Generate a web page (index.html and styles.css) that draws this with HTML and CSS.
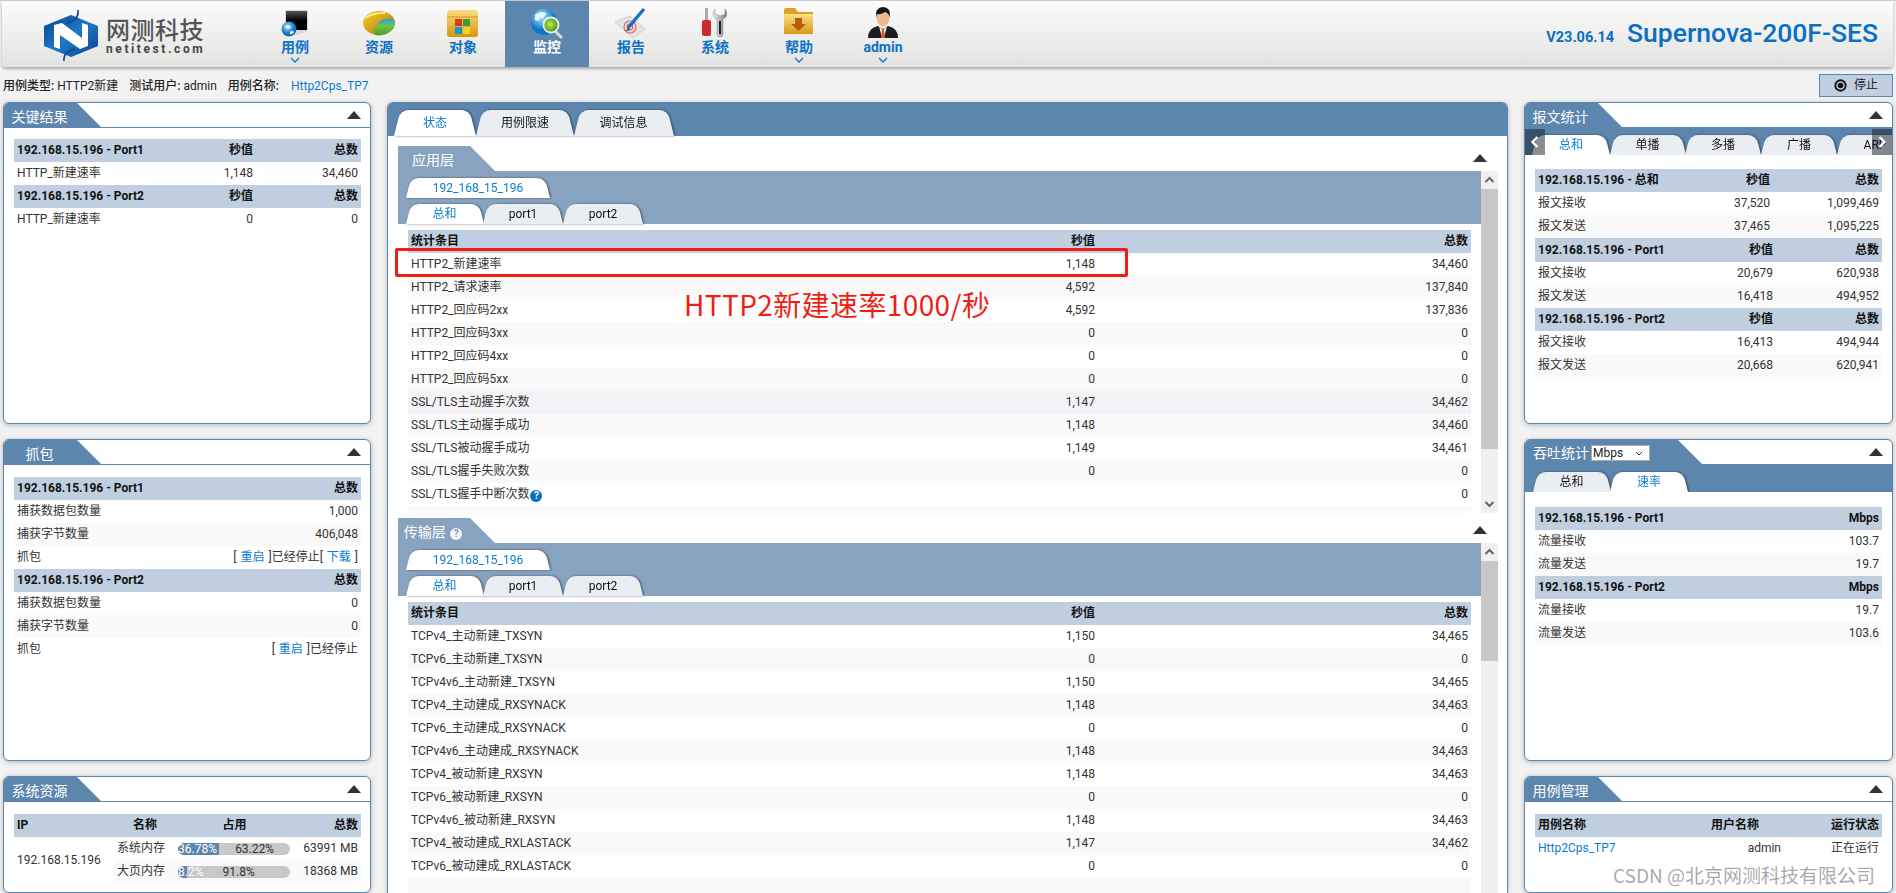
FILE: index.html
```html
<!DOCTYPE html>
<html lang="zh">
<head>
<meta charset="utf-8">
<title>Supernova</title>
<link rel="stylesheet" href="styles.css">
</head>
<body>
<header class="topbar">
  <div class="logo">
    <svg class="logo-mark" width="56" height="52" viewBox="0 0 56 52">
      <defs><linearGradient id="lg" x1="0" y1="0" x2="1" y2="1"><stop offset="0" stop-color="#0b3f8e"/><stop offset=".5" stop-color="#1c7ac8"/><stop offset="1" stop-color="#0b3f8e"/></linearGradient></defs>
      <polygon points="28,5 55,16 55,36 28,47 1,36 1,16" fill="url(#lg)"/>
      <path d="M11 15 L11 37 L17 39 L17 25 L37 39 L45 36 L45 15 L39 13 L39 28 L19 13 Z" fill="#fff"/>
      <path d="M35 0 C36 8 30 12 24 13 M21 51 C20 44 26 40 32 39" fill="none" stroke="#123f86" stroke-width="1.6"/>
    </svg>
    <div class="logo-text">
      <div class="logo-cn">网测科技</div>
      <div class="logo-en">netitest.com</div>
    </div>
  </div>
  <nav class="nav">
    <a class="nav-item">
      <svg class="nav-icon" width="36" height="32" viewBox="0 0 36 32">
        <defs><linearGradient id="m1" x1="0" y1="0" x2="0" y2="1"><stop offset="0" stop-color="#555"/><stop offset=".5" stop-color="#000"/></linearGradient><radialGradient id="g1" cx=".4" cy=".35"><stop offset="0" stop-color="#9fe0fa"/><stop offset="1" stop-color="#0c6fc0"/></radialGradient></defs>
        <path d="M8 3 H31 V24 L20 28 H8 Z" fill="#d8d8d8"/>
        <rect x="9" y="4" width="21" height="19" fill="url(#m1)"/>
        <circle cx="12" cy="22" r="7.5" fill="url(#g1)"/>
        <path d="M8 19 q4 -2 6 1 q-2 3 -5 1 Z M13 25 q3 -2 4 0 q-2 3 -4 2 Z" fill="#e6f6fd"/>
      </svg>
      <span class="nav-label">用例</span>
      <svg class="nav-caret" width="10" height="6" viewBox="0 0 10 6"><path d="M1 1 L5 5 L9 1" fill="none" stroke="#0b72c4" stroke-width="1.3"/></svg>
    </a>
    <a class="nav-item">
      <svg class="nav-icon" width="36" height="32" viewBox="0 0 36 32">
        <defs><linearGradient id="l1" x1="0" y1="0" x2="1" y2="1"><stop offset="0" stop-color="#fbd52e"/><stop offset="1" stop-color="#a86a06"/></linearGradient><linearGradient id="l2" x1="0" y1="0" x2="0" y2="1"><stop offset="0" stop-color="#2b9fe0"/><stop offset=".45" stop-color="#72c34a"/><stop offset="1" stop-color="#4c9a22"/></linearGradient></defs>
        <ellipse cx="18" cy="16" rx="16" ry="12" fill="url(#l1)"/>
        <path d="M34 14 C30 10 22 11 18 15 C14 19 13 24 14 28 C24 30 34 24 34 14 Z" fill="url(#l2)"/>
        <path d="M4 11 C10 7 18 6 24 6" fill="none" stroke="#fff3a8" stroke-width="1.5"/>
      </svg>
      <span class="nav-label">资源</span>
    </a>
    <a class="nav-item">
      <svg class="nav-icon" width="36" height="32" viewBox="0 0 36 32">
        <defs><linearGradient id="f1" x1="0" y1="0" x2="0" y2="1"><stop offset="0" stop-color="#fbdd80"/><stop offset="1" stop-color="#d7930f"/></linearGradient></defs>
        <path d="M5 3 H30 Q33 3 33 7 V27 Q33 30 30 30 H5 Q2 30 2 27 V7 Q2 3 5 3 Z" fill="url(#f1)"/>
        <path d="M2 10 H33" stroke="#c9982d" stroke-width="1"/>
        <rect x="10" y="12" width="7" height="7" fill="#d8391f"/><rect x="18" y="12" width="7" height="7" fill="#3e9b35"/>
        <rect x="10" y="20" width="7" height="7" fill="#119ccf"/><rect x="18" y="20" width="7" height="7" fill="#f3d21b"/>
      </svg>
      <span class="nav-label">对象</span>
    </a>
    <a class="nav-item nav-item--active">
      <svg class="nav-icon" width="36" height="32" viewBox="0 0 36 32">
        <defs><radialGradient id="g2" cx=".4" cy=".3"><stop offset="0" stop-color="#b8ecfb"/><stop offset="1" stop-color="#0b74cd"/></radialGradient><radialGradient id="g3" cx=".45" cy=".45"><stop offset="0" stop-color="#c5e85c"/><stop offset="1" stop-color="#4d9a12"/></radialGradient></defs>
        <circle cx="15" cy="15" r="13" fill="url(#g2)"/>
        <path d="M6 8 q5 -5 11 -2 q-1 5 -6 5 q-1 4 -5 2 Z" fill="#e5f7fd"/>
        <path d="M26 24 L33 31" stroke="#d8d8d8" stroke-width="3"/>
        <circle cx="22" cy="18" r="7.5" fill="url(#g3)" stroke="#e9f3f6" stroke-width="1.8"/>
      </svg>
      <span class="nav-label">监控</span>
    </a>
    <a class="nav-item">
      <svg class="nav-icon" width="36" height="32" viewBox="0 0 36 32">
        <path d="M2 15 L17 9 L32 22 L20 31 Z" fill="#e4e4e4" stroke="#bbb" stroke-width=".6"/>
        <circle cx="17" cy="20" r="6" fill="none" stroke="#dc6a6a" stroke-width="1.2"/>
        <circle cx="17" cy="20" r="2.8" fill="none" stroke="#dc6a6a" stroke-width="1.2"/>
        <path d="M15 21 L31 2" stroke="#1b6fc8" stroke-width="3.4"/>
        <path d="M15 21 L13 24 L17 23 Z" fill="#333"/>
      </svg>
      <span class="nav-label">报告</span>
    </a>
    <a class="nav-item">
      <svg class="nav-icon" width="36" height="32" viewBox="0 0 36 32">
        <defs><linearGradient id="w1" x1="0" y1="0" x2="1" y2="0"><stop offset="0" stop-color="#eee"/><stop offset="1" stop-color="#777"/></linearGradient></defs>
        <path d="M8 1 H11 V13 H8 Z" fill="#aaa"/>
        <rect x="5" y="13" width="9" height="16" rx="2" fill="#cd2b2b"/>
        <path d="M18 2 C15 6 16 11 20 12 V27 Q20 30 23 30 Q26 30 26 27 V12 C30 11 31 6 28 2 V7 L23 9 L18 7 Z" fill="url(#w1)" stroke="#888" stroke-width=".5"/>
        <rect x="22" y="14" width="2" height="13" fill="#222"/>
      </svg>
      <span class="nav-label">系统</span>
    </a>
    <a class="nav-item">
      <svg class="nav-icon" width="36" height="32" viewBox="0 0 36 32">
        <defs><linearGradient id="f2" x1="0" y1="0" x2="0" y2="1"><stop offset="0" stop-color="#fbe083"/><stop offset="1" stop-color="#d99a16"/></linearGradient></defs>
        <path d="M3 3 Q3 1 5 1 H14 L17 5 H32 V27 H3 Z" fill="#d9a32a"/>
        <rect x="3" y="7" width="29" height="20" rx="1" fill="url(#f2)"/>
        <path d="M14 11 H21 V17 H25 L17.5 24 L10 17 H14 Z" fill="#b9590c"/>
      </svg>
      <span class="nav-label">帮助</span>
      <svg class="nav-caret" width="10" height="6" viewBox="0 0 10 6"><path d="M1 1 L5 5 L9 1" fill="none" stroke="#0b72c4" stroke-width="1.3"/></svg>
    </a>
    <a class="nav-item">
      <svg class="nav-icon" width="36" height="32" viewBox="0 0 36 32">
        <path d="M3 31 Q3 21 13 19 L18 22 L23 19 Q33 21 33 31 Z" fill="#1d1d1f"/>
        <path d="M14 19 L18 23 L22 19 L19 31 H17 Z" fill="#f3f3f3"/>
        <path d="M17 22 H19 L20 31 H16 Z" fill="#d9581c"/>
        <ellipse cx="18" cy="11" rx="6.5" ry="8.5" fill="#eab98d"/>
        <path d="M11 11 Q10 0 18 0 Q26 0 25 11 Q24 6 20 5 Q15 8 12 7 Z" fill="#141414"/>
      </svg>
      <span class="nav-label">admin</span>
      <svg class="nav-caret" width="10" height="6" viewBox="0 0 10 6"><path d="M1 1 L5 5 L9 1" fill="none" stroke="#0b72c4" stroke-width="1.3"/></svg>
    </a>
  </nav>
  <div class="brand">
    <span class="brand-version">V23.06.14</span>
    <span class="brand-name">Supernova-200F-SES</span>
  </div>
</header>

<div class="infobar">
  <div class="info">
    <span class="info-item"><b class="info-key">用例类型:</b> HTTP2新建</span>
    <span class="info-item"><b class="info-key">测试用户:</b> admin</span>
    <span class="info-item"><b class="info-key">用例名称:</b><a class="link info-link">Http2Cps_TP7</a></span>
  </div>
  <button class="stop">
    <svg width="13" height="13" viewBox="0 0 13 13"><circle cx="6.5" cy="6.5" r="5.2" fill="none" stroke="#111" stroke-width="1.9"/><circle cx="6.5" cy="6.5" r="2.8" fill="#111"/></svg>
    <span>停止</span>
  </button>
</div>

<main class="main">
  <div class="col">
    <section class="panel panel--h322">
      <div class="panel-head"><h2 class="title">关键结果</h2><i class="collapse"></i></div>
      <div class="panel-body">
        <table class="grid grid--left">
          <colgroup><col class="c-l1"><col class="c-l2"><col class="c-l3"></colgroup>
          <tr class="hd"><th>192.168.15.196 - Port1</th><th class="r">秒值</th><th class="r">总数</th></tr>
          <tr><td>HTTP_新建速率</td><td class="r">1,148</td><td class="r">34,460</td></tr>
          <tr class="hd"><th>192.168.15.196 - Port2</th><th class="r">秒值</th><th class="r">总数</th></tr>
          <tr><td>HTTP_新建速率</td><td class="r">0</td><td class="r">0</td></tr>
        </table>
      </div>
    </section>
    <section class="panel panel--h322">
      <div class="panel-head"><h2 class="title">抓包</h2><i class="collapse"></i></div>
      <div class="panel-body">
        <table class="grid grid--left">
          <colgroup><col class="c-w1"><col class="c-w2"></colgroup>
          <tr class="hd"><th>192.168.15.196 - Port1</th><th class="r">总数</th></tr>
          <tr><td>捕获数据包数量</td><td class="r">1,000</td></tr>
          <tr class="alt"><td>捕获字节数量</td><td class="r">406,048</td></tr>
          <tr><td>抓包</td><td class="r">[ <a class="link link--act">重启</a> ]已经停止[ <a class="link link--act">下载</a> ]</td></tr>
          <tr class="hd"><th>192.168.15.196 - Port2</th><th class="r">总数</th></tr>
          <tr><td>捕获数据包数量</td><td class="r">0</td></tr>
          <tr class="alt"><td>捕获字节数量</td><td class="r">0</td></tr>
          <tr><td>抓包</td><td class="r">[ <a class="link link--act">重启</a> ]已经停止</td></tr>
        </table>
      </div>
    </section>
    <section class="panel panel--h117">
      <div class="panel-head"><h2 class="title">系统资源</h2><i class="collapse"></i></div>
      <div class="panel-body">
        <table class="grid grid--left">
          <colgroup><col class="c-s1"><col class="c-s2"><col class="c-s3"><col class="c-s4"></colgroup>
          <tr class="hd"><th>IP</th><th class="c">名称</th><th class="c">占用</th><th class="r">总数</th></tr>
          <tr>
            <td rowspan="2">192.168.15.196</td><td>系统内存</td>
            <td class="barcell"><div class="bar"><span class="bar-fill" style="width:36.78%">36.78%</span><span class="bar-rest">63.22%</span></div></td>
            <td class="r">63991 MB</td>
          </tr>
          <tr class="alt">
            <td>大页内存</td>
            <td class="barcell"><div class="bar"><span class="bar-fill" style="width:8.2%">8.2%</span><span class="bar-rest">91.8%</span></div></td>
            <td class="r">18368 MB</td>
          </tr>
        </table>
      </div>
    </section>
  </div>

  <section class="center">
    <div class="tabs tabs--main">
      <a class="tab tab--big tab--on tab--w82"><span>状态</span></a>
      <a class="tab tab--big tab--w98"><span>用例限速</span></a>
      <a class="tab tab--big tab--w99"><span>调试信息</span></a>
    </div>
    <div class="center-body">
      <div class="sec">
        <div class="sec-head"><h3 class="title title--sec">应用层</h3><i class="collapse collapse--sec"></i></div>
        <div class="sec-body sec-body--a">
          <div class="sec-scroll">
            <div class="sec-tabs">
              <div class="tabs"><a class="tab tab--on tab--ip"><span>192_168_15_196</span></a></div>
              <div class="tabs tabs--second">
                <a class="tab tab--on tab--w77"><span>总和</span></a>
                <a class="tab tab--w80"><span>port1</span></a>
                <a class="tab tab--w80"><span>port2</span></a>
              </div>
            </div>
            <table class="grid grid--center">
              <colgroup><col class="c-c1"><col class="c-c2"><col class="c-c3"></colgroup>
              <tr class="hd"><th>统计条目</th><th class="r">秒值</th><th class="r">总数</th></tr>
              <tr><td>HTTP2_新建速率</td><td class="r">1,148</td><td class="r">34,460</td></tr>
              <tr class="alt"><td>HTTP2_请求速率</td><td class="r">4,592</td><td class="r">137,840</td></tr>
              <tr><td>HTTP2_回应码2xx</td><td class="r">4,592</td><td class="r">137,836</td></tr>
              <tr class="alt"><td>HTTP2_回应码3xx</td><td class="r">0</td><td class="r">0</td></tr>
              <tr><td>HTTP2_回应码4xx</td><td class="r">0</td><td class="r">0</td></tr>
              <tr class="alt"><td>HTTP2_回应码5xx</td><td class="r">0</td><td class="r">0</td></tr>
              <tr class="hover"><td>SSL/TLS主动握手次数</td><td class="r">1,147</td><td class="r">34,462</td></tr>
              <tr class="alt"><td>SSL/TLS主动握手成功</td><td class="r">1,148</td><td class="r">34,460</td></tr>
              <tr><td>SSL/TLS被动握手成功</td><td class="r">1,149</td><td class="r">34,461</td></tr>
              <tr class="alt"><td>SSL/TLS握手失败次数</td><td class="r">0</td><td class="r">0</td></tr>
              <tr><td>SSL/TLS握手中断次数<i class="help">?</i></td><td class="r"></td><td class="r">0</td></tr>
              <tr class="alt"><td></td><td></td><td></td></tr>
            </table>
          </div>
          <div class="scrollbar">
            <svg class="sb-arrow" width="17" height="18" viewBox="0 0 17 18"><path d="M4.5 11 L8.5 7 L12.5 11" fill="none" stroke="#666" stroke-width="2"/></svg>
            <div class="sb-thumb sb-thumb--a"></div>
            <svg class="sb-arrow sb-arrow--end" width="17" height="18" viewBox="0 0 17 18"><path d="M4.5 7 L8.5 11 L12.5 7" fill="none" stroke="#666" stroke-width="2"/></svg>
          </div>
        </div>
      </div>
      <div class="sec sec--fill">
        <div class="sec-head"><h3 class="title title--sec">传输层 <i class="help help--title">?</i></h3><i class="collapse collapse--sec"></i></div>
        <div class="sec-body sec-body--b">
          <div class="sec-scroll">
            <div class="sec-tabs">
              <div class="tabs"><a class="tab tab--on tab--ip"><span>192_168_15_196</span></a></div>
              <div class="tabs tabs--second">
                <a class="tab tab--on tab--w77"><span>总和</span></a>
                <a class="tab tab--w80"><span>port1</span></a>
                <a class="tab tab--w80"><span>port2</span></a>
              </div>
            </div>
            <table class="grid grid--center">
              <colgroup><col class="c-c1"><col class="c-c2"><col class="c-c3"></colgroup>
              <tr class="hd"><th>统计条目</th><th class="r">秒值</th><th class="r">总数</th></tr>
              <tr><td>TCPv4_主动新建_TXSYN</td><td class="r">1,150</td><td class="r">34,465</td></tr>
              <tr class="alt"><td>TCPv6_主动新建_TXSYN</td><td class="r">0</td><td class="r">0</td></tr>
              <tr><td>TCPv4v6_主动新建_TXSYN</td><td class="r">1,150</td><td class="r">34,465</td></tr>
              <tr class="alt"><td>TCPv4_主动建成_RXSYNACK</td><td class="r">1,148</td><td class="r">34,463</td></tr>
              <tr><td>TCPv6_主动建成_RXSYNACK</td><td class="r">0</td><td class="r">0</td></tr>
              <tr class="alt"><td>TCPv4v6_主动建成_RXSYNACK</td><td class="r">1,148</td><td class="r">34,463</td></tr>
              <tr><td>TCPv4_被动新建_RXSYN</td><td class="r">1,148</td><td class="r">34,463</td></tr>
              <tr class="alt"><td>TCPv6_被动新建_RXSYN</td><td class="r">0</td><td class="r">0</td></tr>
              <tr><td>TCPv4v6_被动新建_RXSYN</td><td class="r">1,148</td><td class="r">34,463</td></tr>
              <tr class="alt"><td>TCPv4_被动建成_RXLASTACK</td><td class="r">1,147</td><td class="r">34,462</td></tr>
              <tr><td>TCPv6_被动建成_RXLASTACK</td><td class="r">0</td><td class="r">0</td></tr>
              <tr class="alt"><td></td><td></td><td></td></tr>
            </table>
          </div>
          <div class="scrollbar">
            <svg class="sb-arrow" width="17" height="18" viewBox="0 0 17 18"><path d="M4.5 11 L8.5 7 L12.5 11" fill="none" stroke="#666" stroke-width="2"/></svg>
            <div class="sb-thumb sb-thumb--b"></div>
          </div>
        </div>
      </div>
    </div>
  </section>

  <div class="col">
    <section class="panel panel--h322">
      <div class="panel-head"><h2 class="title">报文统计</h2><i class="collapse"></i></div>
      <div class="panel-tabs">
        <div class="slider">
          <a class="tab tab--on tab--w78"><span>总和</span></a>
          <a class="tab tab--w75"><span>单播</span></a>
          <a class="tab tab--w76"><span>多播</span></a>
          <a class="tab tab--w76"><span>广播</span></a>
          <a class="tab tab--w76"><span>ARP</span></a>
        </div>
        <span class="slide-btn slide-btn--prev"><svg width="10" height="14" viewBox="0 0 10 14"><path d="M7.5 2 L2.5 7 L7.5 12" fill="none" stroke="#fff" stroke-width="2.4"/></svg></span>
        <span class="slide-btn slide-btn--next"><svg width="10" height="14" viewBox="0 0 10 14"><path d="M2.5 2 L7.5 7 L2.5 12" fill="none" stroke="#fff" stroke-width="2.4"/></svg></span>
      </div>
      <div class="panel-body panel-body--tabbed">
        <table class="grid grid--left">
          <colgroup><col class="c-r1"><col class="c-r2"><col class="c-r3"></colgroup>
          <tr class="hd"><th>192.168.15.196 - 总和</th><th class="r">秒值</th><th class="r">总数</th></tr>
          <tr><td>报文接收</td><td class="r">37,520</td><td class="r">1,099,469</td></tr>
          <tr class="alt"><td>报文发送</td><td class="r">37,465</td><td class="r">1,095,225</td></tr>
        </table>
        <table class="grid grid--left">
          <colgroup><col class="c-p1"><col class="c-r2"><col class="c-p3"></colgroup>
          <tr class="hd hd--24"><th>192.168.15.196 - Port1</th><th class="r">秒值</th><th class="r">总数</th></tr>
          <tr><td>报文接收</td><td class="r">20,679</td><td class="r">620,938</td></tr>
          <tr class="alt"><td>报文发送</td><td class="r">16,418</td><td class="r">494,952</td></tr>
          <tr class="hd"><th>192.168.15.196 - Port2</th><th class="r">秒值</th><th class="r">总数</th></tr>
          <tr><td>报文接收</td><td class="r">16,413</td><td class="r">494,944</td></tr>
          <tr class="alt"><td>报文发送</td><td class="r">20,668</td><td class="r">620,941</td></tr>
        </table>
      </div>
    </section>
    <section class="panel panel--h322">
      <div class="panel-head"><h2 class="title title--select">吞吐统计<span class="unit-wrap"><select class="unit"><option>Mbps</option></select><svg class="unit-caret" width="8" height="5" viewBox="0 0 8 5"><path d="M1 1 L4 4 L7 1" fill="none" stroke="#333" stroke-width="1"/></svg></span></h2><i class="collapse"></i></div>
      <div class="panel-tabs panel-tabs--plain">
        <a class="tab tab--w77"><span>总和</span></a>
        <a class="tab tab--on tab--w78"><span>速率</span></a>
      </div>
      <div class="panel-body panel-body--tabbed">
        <table class="grid grid--left">
          <colgroup><col class="c-w1"><col class="c-w2"></colgroup>
          <tr class="hd"><th>192.168.15.196 - Port1</th><th class="r">Mbps</th></tr>
          <tr><td>流量接收</td><td class="r">103.7</td></tr>
          <tr class="alt"><td>流量发送</td><td class="r">19.7</td></tr>
          <tr class="hd"><th>192.168.15.196 - Port2</th><th class="r">Mbps</th></tr>
          <tr><td>流量接收</td><td class="r">19.7</td></tr>
          <tr class="alt"><td>流量发送</td><td class="r">103.6</td></tr>
        </table>
      </div>
    </section>
    <section class="panel panel--h117">
      <div class="panel-head"><h2 class="title">用例管理</h2><i class="collapse"></i></div>
      <div class="panel-body">
        <table class="grid grid--left">
          <colgroup><col class="c-u1"><col class="c-u2"><col class="c-u3"></colgroup>
          <tr class="hd"><th>用例名称</th><th class="r user-h">用户名称</th><th class="r">运行状态</th></tr>
          <tr><td><a class="link">Http2Cps_TP7</a></td><td class="r">admin</td><td class="r">正在运行</td></tr>
        </table>
      </div>
    </section>
  </div>
</main>

<div class="mark-box"></div>
<div class="mark-text">HTTP2新建速率1000/秒</div>
<div class="watermark">CSDN @北京网测科技有限公司</div>
</body>
</html>
```
FILE: styles.css
```css
* { box-sizing: border-box; }
html, body { margin: 0; height: 893px; overflow: hidden; }
body {
  position: relative;
  background: #f2f2f2;
  border-top: 1px solid #c8c8c8;
  font: 12px/23px Roboto, "Noto Sans CJK SC", sans-serif;
  color: #333;
}
h2, h3 { margin: 0; font-weight: 400; }
.link { color: #0a7bd0; }
.link--act { margin: 0 1px; }

/* top bar */
.topbar {
  display: flex;
  align-items: stretch;
  height: 66px;
  margin: 0 3px 0 2px;
  border-radius: 0 0 4px 4px;
  background: linear-gradient(#fcfcfc, #e2e2e0);
  box-shadow: 0 2px 3px rgba(0, 0, 0, .3);
}
.logo { display: flex; width: 251px; padding: 9px 0 0 38px; }
.logo-mark { flex: none; margin: 0 7px 0 3px; }
.logo-cn { font-size: 24px; line-height: 26px; margin-top: 8px; color: #555; font-weight: 500; letter-spacing: .5px; }
.logo-en { font: 700 12px/10px Roboto, sans-serif; letter-spacing: 2.6px; color: #444; }
.nav { display: flex; }
.nav-item {
  display: flex; flex-direction: column; align-items: center;
  width: 84px; padding-top: 6px;
  color: #0b72c4; font-size: 14px; font-weight: 700;
}
.nav-item--active { background: #5d86ae; color: #fff; }
.nav-icon { flex: none; display: block; }
.nav-label { line-height: 18px; margin-top: -1px; }
.nav-caret { margin-top: 1px; }
.brand { margin-left: auto; padding: 14px 15px 0 0; display: flex; align-items: baseline; gap: 13px; color: #0a6fc4; height: 50px; }
.brand-version { font-size: 14.5px; font-weight: 700; }
.brand-name { font-size: 26.5px; font-weight: 500; line-height: 36px; }

/* info row */
.infobar {
  display: flex; justify-content: space-between; align-items: center;
  height: 23px; margin: 7px 3px 5px 3px;
}
.info { display: flex; gap: 11px; padding-top: 2px; color: #222; }
.info-key { font-weight: 500; }
.info-link { margin-left: 12px; }
.stop {
  display: flex; align-items: center; gap: 7px;
  width: 74px; height: 23px; padding: 0 0 0 14px;
  background: #c0cfe0; border: 1px solid #5d86ae; border-radius: 0;
  font: inherit; color: #222;
}

/* columns */
.main {
  display: grid;
  grid-template-columns: 368px 1121px 369px;
  column-gap: 16px;
  padding-left: 3px;
  align-items: start;
}
.col { display: flex; flex-direction: column; gap: 15px; }
.panel {
  background: #fff;
  border: 1px solid #5d86ae;
  border-radius: 6px;
  box-shadow: 0 1px 5px rgba(0, 0, 0, .25);
  overflow: hidden;
}
.panel--h322 { height: 322px; }
.panel--h117 { height: 117px; }
.panel-head {
  position: relative;
  height: 25px;
  box-shadow: inset 0 -1px #5d86ae;
}
.title {
  width: 98px; height: 25px;
  padding: 0 27px 0 0;
  text-align: center;
  font-size: 14px; line-height: 28px;
  color: #fff;
  background: #5d86ae;
  clip-path: polygon(0 0, 73px 0, 100% 100%, 0 100%);
}
.title--select {
  display: flex; align-items: center;
  width: 178px; padding: 0 0 0 8px;
  clip-path: polygon(0 0, 153px 0, 100% 100%, 0 100%);
}
.unit-wrap { position: relative; display: block; width: 59px; height: 16px; margin-left: 2px; }
.unit {
  display: block;
  width: 59px; height: 16px; padding: 0 0 0 1px;
  appearance: none;
  font: 12px/14px Roboto, sans-serif; color: #222;
  background: #fff; border: 1px solid #aaa; border-radius: 0;
}
.unit-caret { position: absolute; right: 7px; top: 6px; }
.collapse {
  position: absolute; right: 9px; top: 8px;
  border: solid transparent;
  border-width: 0 7.5px 8px;
  border-bottom-color: #333;
}
.collapse--sec { right: 11px; top: 8px; }
.panel-body { padding: 11px 10px 0; }
.panel + .panel .panel-body { padding-top: 12px; }
.panel-body--tabbed { padding-top: 14px; }
.panel + .panel .panel-body--tabbed { padding-top: 15px; }
.panel-tabs {
  position: relative;
  height: 27px;
  padding: 7px 0 0 7px;
  background: #5d86ae;
  overflow: hidden;
}
.panel-tabs--plain { display: flex; padding-left: 8px; }
.slider { display: flex; width: 400px; }
.slide-btn {
  position: absolute; top: 1px; bottom: 0; width: 20px;
  display: flex; align-items: center; justify-content: center;
  background: rgba(20, 30, 40, .5);
}
.slide-btn--prev { left: 0; }
.slide-btn--next { right: 0; }

/* tables */
.grid { width: 100%; border-collapse: collapse; table-layout: fixed; }
.grid td, .grid th { padding: 0 3px; height: 23px; font-weight: 400; text-align: left; white-space: nowrap; overflow: hidden; }
.grid th { font-weight: 700; color: #111; }
.grid .r { text-align: right; }
.grid .c { text-align: center; }
.hd { background: #c0cfe0; }
.hd--24 th { height: 24px; }
.alt { background: #f9f9f9; }
.hover { background: #f4f2f6; }
.c-l1 { width: 172px; } .c-l2 { width: 70px; } .c-l3 { width: 105px; }
.c-w1 { width: 170px; } .c-w2 { width: 177px; }
.c-s1 { width: 100px; } .c-s2 { width: 62px; } .c-s3 { width: 117px; } .c-s4 { width: 68px; }
.c-r1 { width: 168px; } .c-r2 { width: 70px; } .c-r3 { width: 109px; }
.c-p1 { width: 171px; } .c-p3 { width: 106px; }
.c-c1 { width: 520px; } .c-c2 { width: 170px; } .c-c3 { width: 373px; }
.c-u1 { width: 150px; } .c-u2 { width: 99px; } .c-u3 { width: 98px; }
.grid .user-h { padding-right: 25px; }
.grid .barcell { padding: 0 3px 0 2px; }
.bar {
  display: flex; height: 12px; border-radius: 6px;
  background: #c8c8c8; font-size: 12px; line-height: 12px;
}
.bar-fill { flex: none; background: #5d86ae; color: #fff; border-radius: 6px 0 0 6px; white-space: nowrap; }
.bar-rest { flex: 1; text-align: center; color: #333; padding-left: 0; }

/* centre */
.center {
  height: 791px;
  background: #fff;
  border: 1px solid #5d86ae;
  border-bottom: 0;
  border-radius: 6px 6px 0 0;
  box-shadow: 0 1px 5px rgba(0, 0, 0, .25);
  overflow: hidden;
}
.tabs { display: flex; }
.tabs--main { height: 33px; padding: 7px 0 0 6px; background: #5d86ae; }
.tabs--second { margin-top: 6px; }
.center-body { padding: 10px 9px 0 10px; }
.sec + .sec { margin-top: 5px; }
.sec-head { position: relative; height: 25px; }
.title--sec { background: #87a3c0; width: 97px; clip-path: polygon(0 0, 72px 0, 100% 100%, 0 100%); }
.sec-body { display: flex; }
.sec-body--a { height: 342px; }
.sec-body--b { height: 400px; }
.sec-scroll { flex: 1; min-width: 0; overflow: hidden; }
.sec-tabs { background: #87a3c0; padding: 7px 0 0 8px; height: 53px; }
.grid--center { width: 1063px; margin: 6px 10px 0; }
.scrollbar { flex: none; width: 17px; display: flex; flex-direction: column; background: #f0f0f0; }
.sb-arrow { flex: none; display: block; }
.sb-arrow--end { margin-top: auto; }
.sb-thumb { flex: none; background: #c8c8c8; }
.sb-thumb--a { height: 260px; }
.sb-thumb--b { height: 100px; }
.help {
  display: inline-block; width: 12px; height: 12px; margin-left: 1px;
  border-radius: 50%; background: #0a6fc4; color: #fff;
  font: 700 10px/12px Roboto, sans-serif; text-align: center; vertical-align: -1px;
}
.help--title { background: #f1f4f7; color: #87a3c0; vertical-align: 0; }

/* tabs */
.tab {
  position: relative;
  flex: none;
  display: inline-flex; justify-content: center; align-items: center;
  height: 20px;
  font-size: 12px; color: #111;
  filter: drop-shadow(1.5px 0 .8px rgba(0, 0, 0, .5));
}
.tab::before, .tab::after {
  content: ""; position: absolute; top: 0; bottom: 0;
  background: #eaeef3; transform-origin: bottom;
}
.tab::before { left: 0; right: 50%; transform: skewX(-14deg); border-radius: 8px 0 0 0; }
.tab::after { left: 50%; right: 0; transform: skewX(14deg); border-radius: 0 8px 0 0; }
.tab span { position: relative; z-index: 1; }
.tab--on { color: #0a7bd0; }
.tab--on::before, .tab--on::after { background: #fff; }
.tab--big { height: 26px; }
.tab--w75 { width: 75px; } .tab--w76 { width: 76px; }
.tab--w77 { width: 77px; } .tab--w78 { width: 78px; }
.tab--w80 { width: 80px; } .tab--w82 { width: 82px; } .tab--w98 { width: 98px; } .tab--w99 { width: 99px; }
.tab--ip { width: 144px; }

/* overlays */
.mark-box {
  position: absolute; left: 395px; top: 247px;
  width: 733px; height: 29px;
  border: 3px solid #f01e14; border-radius: 2px;
}
.mark-text {
  position: absolute; left: 684px; top: 283px;
  font: 28px/40px "Noto Sans CJK SC", sans-serif; letter-spacing: .4px; color: #f01e14; white-space: nowrap;
}
.watermark {
  position: absolute; left: 1613px; top: 862px;
  font: 19px/24px "Noto Sans CJK SC", sans-serif; color: rgba(110, 110, 110, .6);
  text-shadow: 0 0 1px rgba(255, 255, 255, .6); white-space: nowrap;
}
```
